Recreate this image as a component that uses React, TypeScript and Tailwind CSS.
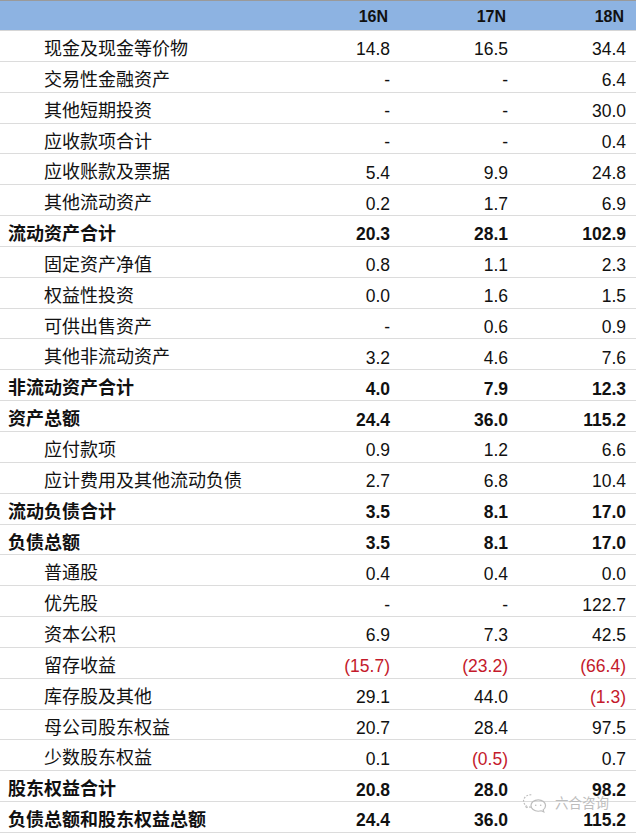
import React from "react";

type Row = {
  label: string;
  values: string[];
  bold?: boolean;
};

const rows: Row[] = [
  { label: "现金及现金等价物", values: ["14.8", "16.5", "34.4"] },
  { label: "交易性金融资产", values: ["-", "-", "6.4"] },
  { label: "其他短期投资", values: ["-", "-", "30.0"] },
  { label: "应收款项合计", values: ["-", "-", "0.4"] },
  { label: "应收账款及票据", values: ["5.4", "9.9", "24.8"] },
  { label: "其他流动资产", values: ["0.2", "1.7", "6.9"] },
  { label: "流动资产合计", values: ["20.3", "28.1", "102.9"], bold: true },
  { label: "固定资产净值", values: ["0.8", "1.1", "2.3"] },
  { label: "权益性投资", values: ["0.0", "1.6", "1.5"] },
  { label: "可供出售资产", values: ["-", "0.6", "0.9"] },
  { label: "其他非流动资产", values: ["3.2", "4.6", "7.6"] },
  { label: "非流动资产合计", values: ["4.0", "7.9", "12.3"], bold: true },
  { label: "资产总额", values: ["24.4", "36.0", "115.2"], bold: true },
  { label: "应付款项", values: ["0.9", "1.2", "6.6"] },
  { label: "应计费用及其他流动负债", values: ["2.7", "6.8", "10.4"] },
  { label: "流动负债合计", values: ["3.5", "8.1", "17.0"], bold: true },
  { label: "负债总额", values: ["3.5", "8.1", "17.0"], bold: true },
  { label: "普通股", values: ["0.4", "0.4", "0.0"] },
  { label: "优先股", values: ["-", "-", "122.7"] },
  { label: "资本公积", values: ["6.9", "7.3", "42.5"] },
  { label: "留存收益", values: ["(15.7)", "(23.2)", "(66.4)"] },
  { label: "库存股及其他", values: ["29.1", "44.0", "(1.3)"] },
  { label: "母公司股东权益", values: ["20.7", "28.4", "97.5"] },
  { label: "少数股东权益", values: ["0.1", "(0.5)", "0.7"] },
  { label: "股东权益合计", values: ["20.8", "28.0", "98.2"], bold: true },
  { label: "负债总额和股东权益总额", values: ["24.4", "36.0", "115.2"], bold: true },
];

const font = { fontFamily: '"Liberation Sans", "Noto Sans CJK SC", sans-serif' };

// faint 六合咨询 stamp sitting over the last rows
function Watermark() {
  return (
    <div className="absolute left-[520px] top-[792px] flex items-center gap-[5px] text-[#bdbdbd] pointer-events-none">
      <svg width="30" height="22" viewBox="0 0 30 24" fill="none" stroke="currentColor" strokeWidth="1.3">
        <path d="M11 3c-5 0-8.5 3-8.5 6.8 0 2.1 1.1 3.9 2.9 5.1l-.8 2.6 3-1.5c1 .3 2.1.5 3.3.5" strokeDasharray="2 1.6" />
        <path d="M18.5 8.5c4.6 0 8 2.8 8 6.3 0 1.9-1 3.6-2.6 4.7l.7 2.3-2.7-1.3c-1 .3-2.1.5-3.3.5-4.6 0-8-2.8-8-6.2s3.4-6.3 7.9-6.3z" />
        <circle cx="15.8" cy="14.4" r=".9" fill="currentColor" stroke="none" />
        <circle cx="21.2" cy="14.4" r=".9" fill="currentColor" stroke="none" />
      </svg>
      <span className="text-[13.5px] leading-none" style={{ fontFamily: '"Noto Sans CJK SC", sans-serif' }}>
        六合咨询
      </span>
    </div>
  );
}

export default function App() {
  return (
    <div className="relative w-[636px] h-[833px] bg-white overflow-hidden text-[#111]" style={font}>
      {/* header */}
      <div className="grid grid-cols-[272px_118px_118px_118px] pr-[10px] pt-[3px] h-[31px] border-t border-[#9a9a9a] border-b border-b-[#d6d6d6] bg-[#8db3e2] items-center">
        <div />
        {["16N", "17N", "18N"].map((h) => (
          <div key={h} className="text-right text-[16px] font-bold pr-[2px]">
            {h}
          </div>
        ))}
      </div>

      {/* body */}
      {rows.map((r) => (
        <div
          key={r.label}
          className="grid grid-cols-[272px_118px_118px_118px] pr-[10px] pt-[5px] h-[30.85px] border-b border-[#dcdcdc] items-center"
        >
          <div
            className={
              r.bold
                ? "pl-[8px] text-[18px] font-bold whitespace-nowrap"
                : "pl-[44px] text-[18px] whitespace-nowrap"
            }
          >
            {r.label}
          </div>
          {r.values.map((v, i) => (
            <div
              key={i}
              className={
                (r.bold ? "font-bold " : "") +
                (v.startsWith("(") ? "text-[#c41a2b] " : "") +
                "text-right text-[17.5px]"
              }
            >
              {v}
            </div>
          ))}
        </div>
      ))}

      <Watermark />
    </div>
  );
}
